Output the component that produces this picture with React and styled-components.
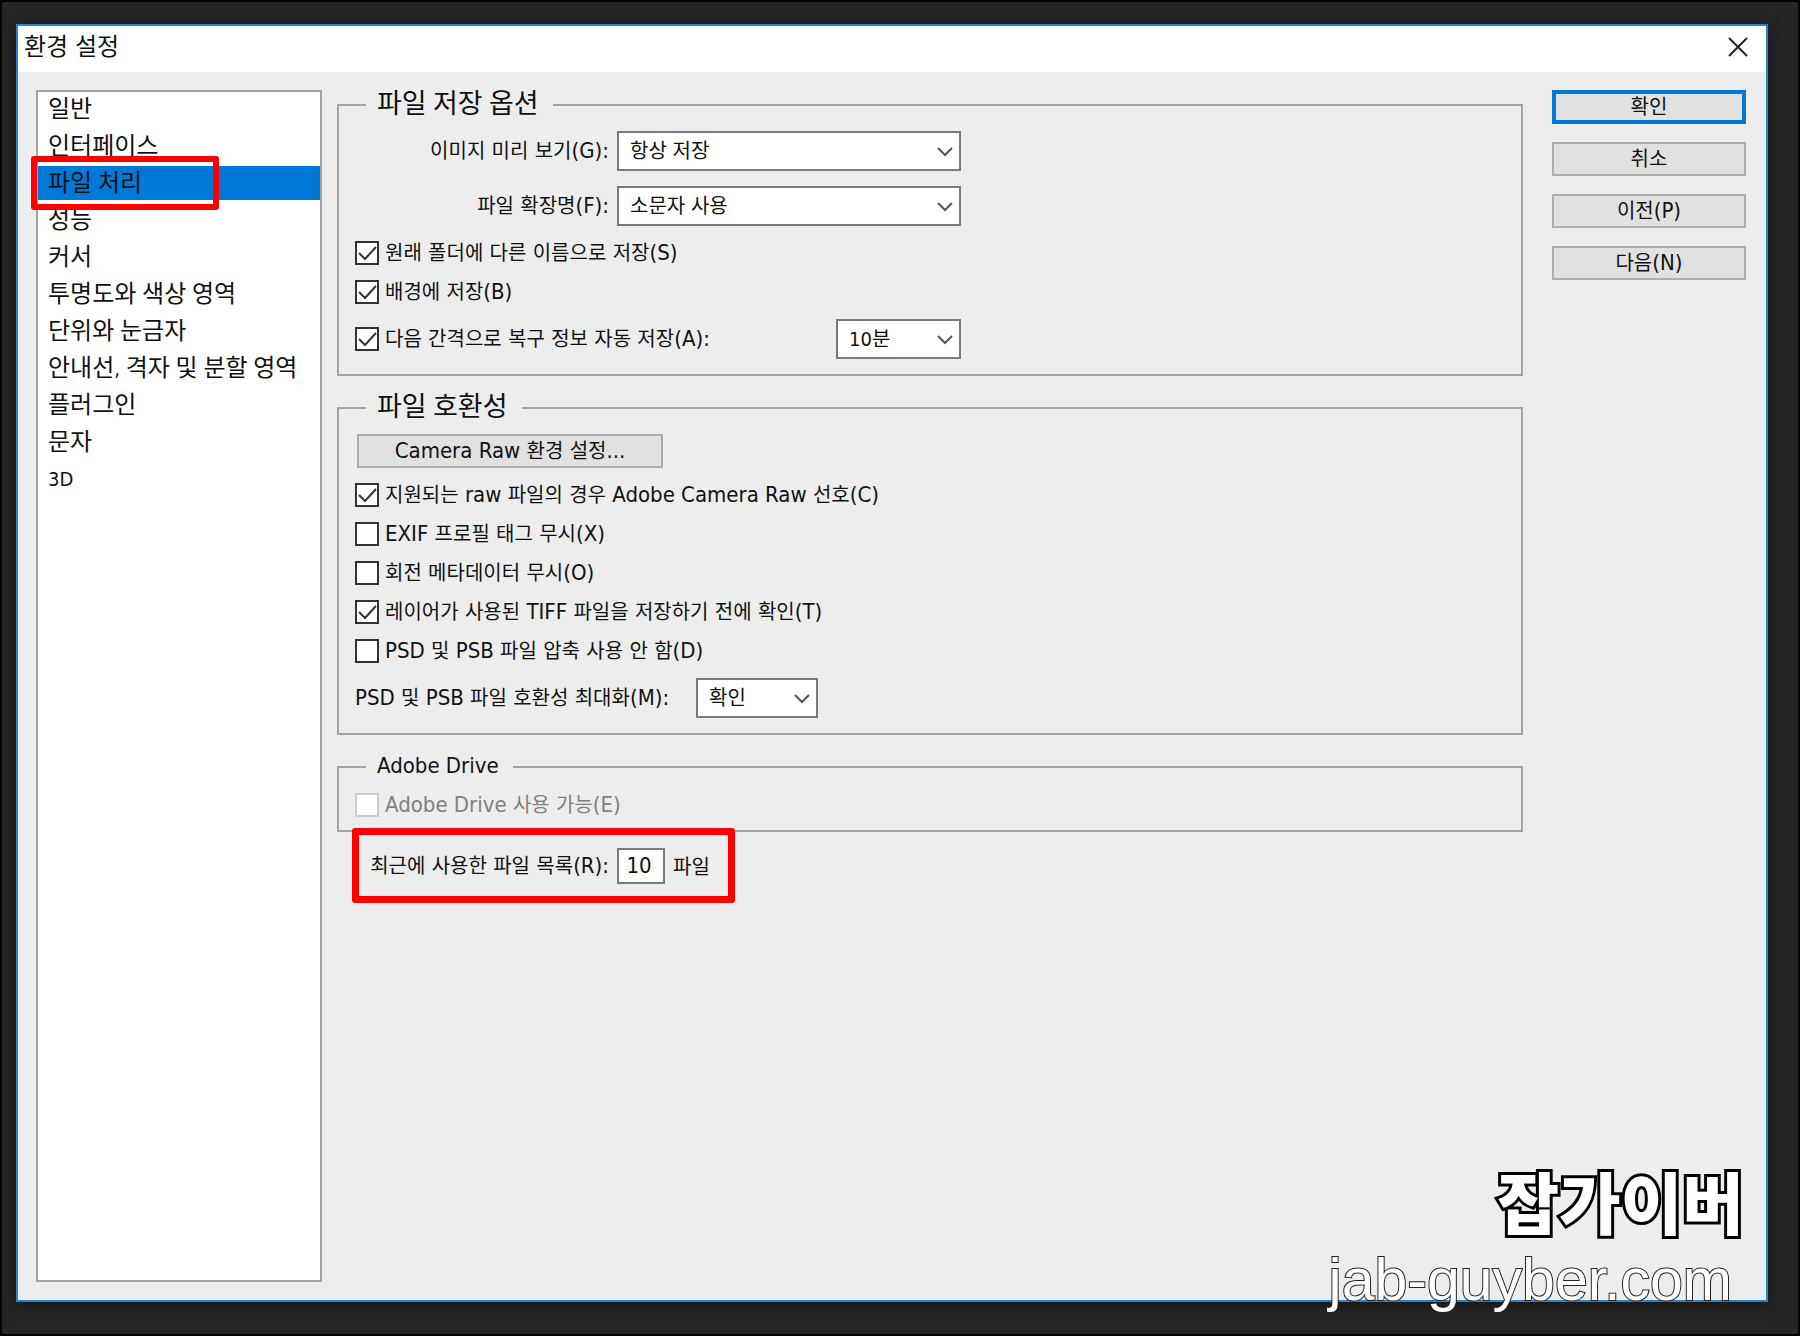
import React, { useState } from 'react';
import styled, { createGlobalStyle } from 'styled-components';

const colors = {
  desk: '#252525',
  panel: '#ededed',
  line: '#a3a3a3',
  field: '#7a7a7a',
  blue: '#0078d7',
  red: '#ff0000',
  text: '#111111',
};

const GlobalStyle = createGlobalStyle`
  *, *::before, *::after {
    box-sizing: border-box;
  }

  body {
    margin: 0;
    background-color: ${colors.desk};
    color: ${colors.text};
    font-family: 'DejaVu Sans Condensed', 'Noto Sans CJK KR', sans-serif;
    font-size: 22px;
  }

  button, input, select {
    font-family: inherit;
    color: inherit;
  }
`;

const Desk = styled.div`
  position: relative;
  display: flex;
  min-height: 100vh;
  border: 2px solid #000;
  padding: 22px 30px 32px 14px;
  background-color: ${colors.desk};
`;

const Dialog = styled.main`
  display: flex;
  flex: 1;
  flex-direction: column;
  border: 2px solid #2484d0;
  background-color: ${colors.panel};
  box-shadow: 0 4px 14px rgba(0, 0, 0, 0.4);
`;

const TitleBar = styled.header`
  display: flex;
  align-items: center;
  justify-content: space-between;
  height: 46px;
  padding: 0 18px 4px 6px;
  background-color: #fff;
`;

const Title = styled.h1`
  margin: 0;
  font-size: 24px;
  font-weight: 400;
  line-height: 30px;
`;

const CloseButton = styled.button`
  display: flex;
  border: 0;
  padding: 0;
  background: none;
`;

const Body = styled.div`
  display: flex;
  flex: 1;
  padding: 18px 20px 18px 18px;
`;

const Sidebar = styled.nav`
  flex: 0 0 286px;
  margin-right: 15px;
  border: 2px solid ${colors.line};
  background-color: #fff;
`;

const SidebarList = styled.ul`
  display: flex;
  flex-direction: column;
  gap: 3px;
  margin: 0;
  padding: 0;
  list-style: none;
`;

const SidebarItem = styled.li`
  position: relative;
`;

const SidebarButton = styled.button`
  display: block;
  width: 100%;
  height: 34px;
  border: 0;
  padding: 0 0 0 10px;
  background-color: ${({ $active }) => ($active ? colors.blue : 'transparent')};
  font-size: 20px;
  line-height: 34px;
  text-align: left;
  white-space: nowrap;
`;

const SidebarMark = styled.span`
  position: absolute;
  z-index: 1;
  top: -10px;
  left: -7px;
  width: 188px;
  height: 54px;
  border: 6px solid ${colors.red};
  border-radius: 3px;
  pointer-events: none;
`;

const Content = styled.div`
  flex: 1;
  min-width: 0;
`;

const Group = styled.fieldset`
  display: flex;
  flex-direction: column;
  align-items: flex-start;
  gap: 15px;
  min-width: 0;
  margin: 0 0 17px;
  border: 2px solid ${colors.line};
  padding: 11px 16px ${({ $compact }) => ($compact ? 13 : 15)}px;
`;

const Legend = styled.legend`
  height: 30px;
  margin-left: 11px;
  padding: 0 14px 0 11px;
  font-size: 22px;
  line-height: 28px;
`;

const Hangul = styled.span`
  font-size: ${({ $size }) => $size}px;
`;

const Row = styled.div`
  display: flex;
  align-items: center;
  justify-content: ${({ $spread }) => ($spread ? 'space-between' : 'flex-start')};
  width: 606px;
`;

const FieldLabel = styled.label`
  flex: 0 0 ${({ $width }) => $width}px;
  margin-right: 8px;
  line-height: 24px;
  text-align: ${({ $align }) => $align || 'left'};
  white-space: nowrap;
`;

const CheckLabel = styled.label`
  display: flex;
  align-items: center;
  gap: 6px;
  height: 24px;
  color: ${({ $disabled }) => ($disabled ? '#808080' : 'inherit')};
  line-height: 24px;
  white-space: nowrap;
`;

const CheckFrame = styled.span`
  position: relative;
  display: flex;

  svg {
    position: absolute;
    inset: 0;
    pointer-events: none;
  }
`;

const CheckInput = styled.input`
  appearance: none;
  width: 24px;
  height: 24px;
  margin: 0;
  border: 2px solid #333;
  background-color: #fff;

  &:disabled {
    border-color: #ccc;
  }
`;

const SelectFrame = styled.span`
  position: relative;
  display: flex;
  flex: 0 0 ${({ $width }) => $width}px;

  svg {
    position: absolute;
    top: 16px;
    right: 8px;
    pointer-events: none;
  }
`;

const SelectInput = styled.select`
  appearance: none;
  width: 100%;
  height: 40px;
  border: 2px solid ${colors.field};
  border-radius: 0;
  padding: 0 30px 0 11px;
  background-color: #fff;
  font-size: 20px;
`;

const Button = styled.button`
  height: 34px;
  border: ${({ $primary }) => ($primary ? `4px solid ${colors.blue}` : '2px solid #adadad')};
  padding: 0;
  background-color: #e1e1e1;
  font-size: 22px;
  line-height: 24px;
`;

const WideButton = styled(Button)`
  width: 306px;
  margin-left: 2px;
`;

const Actions = styled.div`
  display: flex;
  flex: 0 0 194px;
  flex-direction: column;
  gap: 18px;
  margin-left: 29px;
`;

const RecentFiles = styled.div`
  position: relative;
  display: flex;
  align-items: center;
  width: 383px;
  height: 75px;
  margin: -21px 0 0 15px;
  border: 7px solid ${colors.red};
  border-radius: 3px;
  padding-left: 6px;
`;

const CountInput = styled.input`
  width: 48px;
  height: 36px;
  margin-right: 8px;
  border: 2px solid ${colors.field};
  padding: 0 4px 0 0;
  background-color: #fff;
  font-size: 22px;
  text-align: center;
`;

const Watermark = styled.div`
  position: absolute;
  right: 54px;
  bottom: 16px;
  display: flex;
  flex-direction: column;
  align-items: flex-end;
  color: #fff;
  paint-order: stroke fill;
  pointer-events: none;
`;

const WatermarkName = styled.strong`
  font-family: 'Noto Sans CJK KR', sans-serif;
  font-size: 67px;
  font-weight: 900;
  line-height: 84px;
  -webkit-text-stroke: 6px #000;
`;

const WatermarkSite = styled.span`
  margin-right: 12px;
  font-family: 'Liberation Sans', sans-serif;
  font-size: 59px;
  line-height: 76px;
  -webkit-text-stroke: 2px #222;
`;

// Hangul and Latin runs are set in different sizes
const mixed = (text, size = 20) => text.split(/([가-힣]+)/).map((part, index) => (
  index % 2 ? <Hangul key={index} $size={size}>{part}</Hangul> : part
));

const Check = ({ label, defaultChecked, disabled }) => {
  const [checked, setChecked] = useState(Boolean(defaultChecked));

  return (
    <CheckLabel $disabled={disabled}>
      <CheckFrame>
        <CheckInput
          type="checkbox"
          checked={checked}
          disabled={disabled}
          onChange={() => setChecked(!checked)}
        />
        {checked ? (
          <svg width="24" height="24" viewBox="0 0 24 24" fill="none" stroke="#333" strokeWidth="2">
            <path d="M4 12l6 6L21 6" />
          </svg>
        ) : null}
      </CheckFrame>
      <span>{mixed(label)}</span>
    </CheckLabel>
  );
};

const Select = ({ id, width, options, label }) => (
  <SelectFrame $width={width}>
    <SelectInput id={id} aria-label={label}>
      {options.map((option) => <option key={option}>{option}</option>)}
    </SelectInput>
    <svg width="16" height="10" viewBox="0 0 16 10" fill="none" stroke="#555" strokeWidth="2">
      <path d="M1 1l7 7 7-7" />
    </svg>
  </SelectFrame>
);

const sections = [
  '일반',
  '인터페이스',
  '파일 처리',
  '성능',
  '커서',
  '투명도와 색상 영역',
  '단위와 눈금자',
  '안내선, 격자 및 분할 영역',
  '플러그인',
  '문자',
  '3D',
];

const App = () => {
  const [active, setActive] = useState('파일 처리');
  const [count, setCount] = useState('10');

  return (
    <>
      <GlobalStyle />
      <Desk>
        <Dialog>
          <TitleBar>
            <Title>{mixed('환경 설정', 24)}</Title>
            <CloseButton type="button" aria-label="닫기">
              <svg width="20" height="20" viewBox="0 0 20 20" fill="none" stroke="#222" strokeWidth="2">
                <path d="M1 1l18 18M19 1L1 19" />
              </svg>
            </CloseButton>
          </TitleBar>
          <Body>
            <Sidebar>
              <SidebarList>
                {sections.map((name) => (
                  <SidebarItem key={name}>
                    <SidebarButton
                      type="button"
                      $active={active === name}
                      onClick={() => setActive(name)}
                    >
                      {mixed(name, 24)}
                    </SidebarButton>
                    {name === '파일 처리' ? <SidebarMark /> : null}
                  </SidebarItem>
                ))}
              </SidebarList>
            </Sidebar>
            <Content>
              <Group>
                <Legend>{mixed('파일 저장 옵션', 27)}</Legend>
                <Row>
                  <FieldLabel htmlFor="preview" $width={254} $align="right">
                    {mixed('이미지 미리 보기(G):')}
                  </FieldLabel>
                  <Select id="preview" width={344} options={['항상 저장']} />
                </Row>
                <Row>
                  <FieldLabel htmlFor="extension" $width={254} $align="right">
                    {mixed('파일 확장명(F):')}
                  </FieldLabel>
                  <Select id="extension" width={344} options={['소문자 사용']} />
                </Row>
                <Check label="원래 폴더에 다른 이름으로 저장(S)" defaultChecked />
                <Check label="배경에 저장(B)" defaultChecked />
                <Row $spread>
                  <Check label="다음 간격으로 복구 정보 자동 저장(A):" defaultChecked />
                  <Select label="자동 저장 간격" width={125} options={['10분']} />
                </Row>
              </Group>
              <Group>
                <Legend>{mixed('파일 호환성', 27)}</Legend>
                <WideButton type="button">{mixed('Camera Raw 환경 설정...')}</WideButton>
                <Check label="지원되는 raw 파일의 경우 Adobe Camera Raw 선호(C)" defaultChecked />
                <Check label="EXIF 프로필 태그 무시(X)" />
                <Check label="회전 메타데이터 무시(O)" />
                <Check label="레이어가 사용된 TIFF 파일을 저장하기 전에 확인(T)" defaultChecked />
                <Check label="PSD 및 PSB 파일 압축 사용 안 함(D)" />
                <Row>
                  <FieldLabel htmlFor="compat" $width={333}>
                    {mixed('PSD 및 PSB 파일 호환성 최대화(M):')}
                  </FieldLabel>
                  <Select id="compat" width={122} options={['확인']} />
                </Row>
              </Group>
              <Group $compact>
                <Legend>Adobe Drive</Legend>
                <Check label="Adobe Drive 사용 가능(E)" disabled />
              </Group>
              <RecentFiles>
                <FieldLabel htmlFor="recent" $width={244} $align="right">
                  {mixed('최근에 사용한 파일 목록(R):')}
                </FieldLabel>
                <CountInput
                  id="recent"
                  type="text"
                  value={count}
                  onChange={(event) => setCount(event.target.value)}
                />
                {mixed('파일')}
              </RecentFiles>
            </Content>
            <Actions>
              <Button type="button" $primary>{mixed('확인')}</Button>
              <Button type="button">{mixed('취소')}</Button>
              <Button type="button">{mixed('이전(P)')}</Button>
              <Button type="button">{mixed('다음(N)')}</Button>
            </Actions>
          </Body>
        </Dialog>
        <Watermark>
          <WatermarkName>잡가이버</WatermarkName>
          <WatermarkSite>jab-guyber.com</WatermarkSite>
        </Watermark>
      </Desk>
    </>
  );
};

export default App;
